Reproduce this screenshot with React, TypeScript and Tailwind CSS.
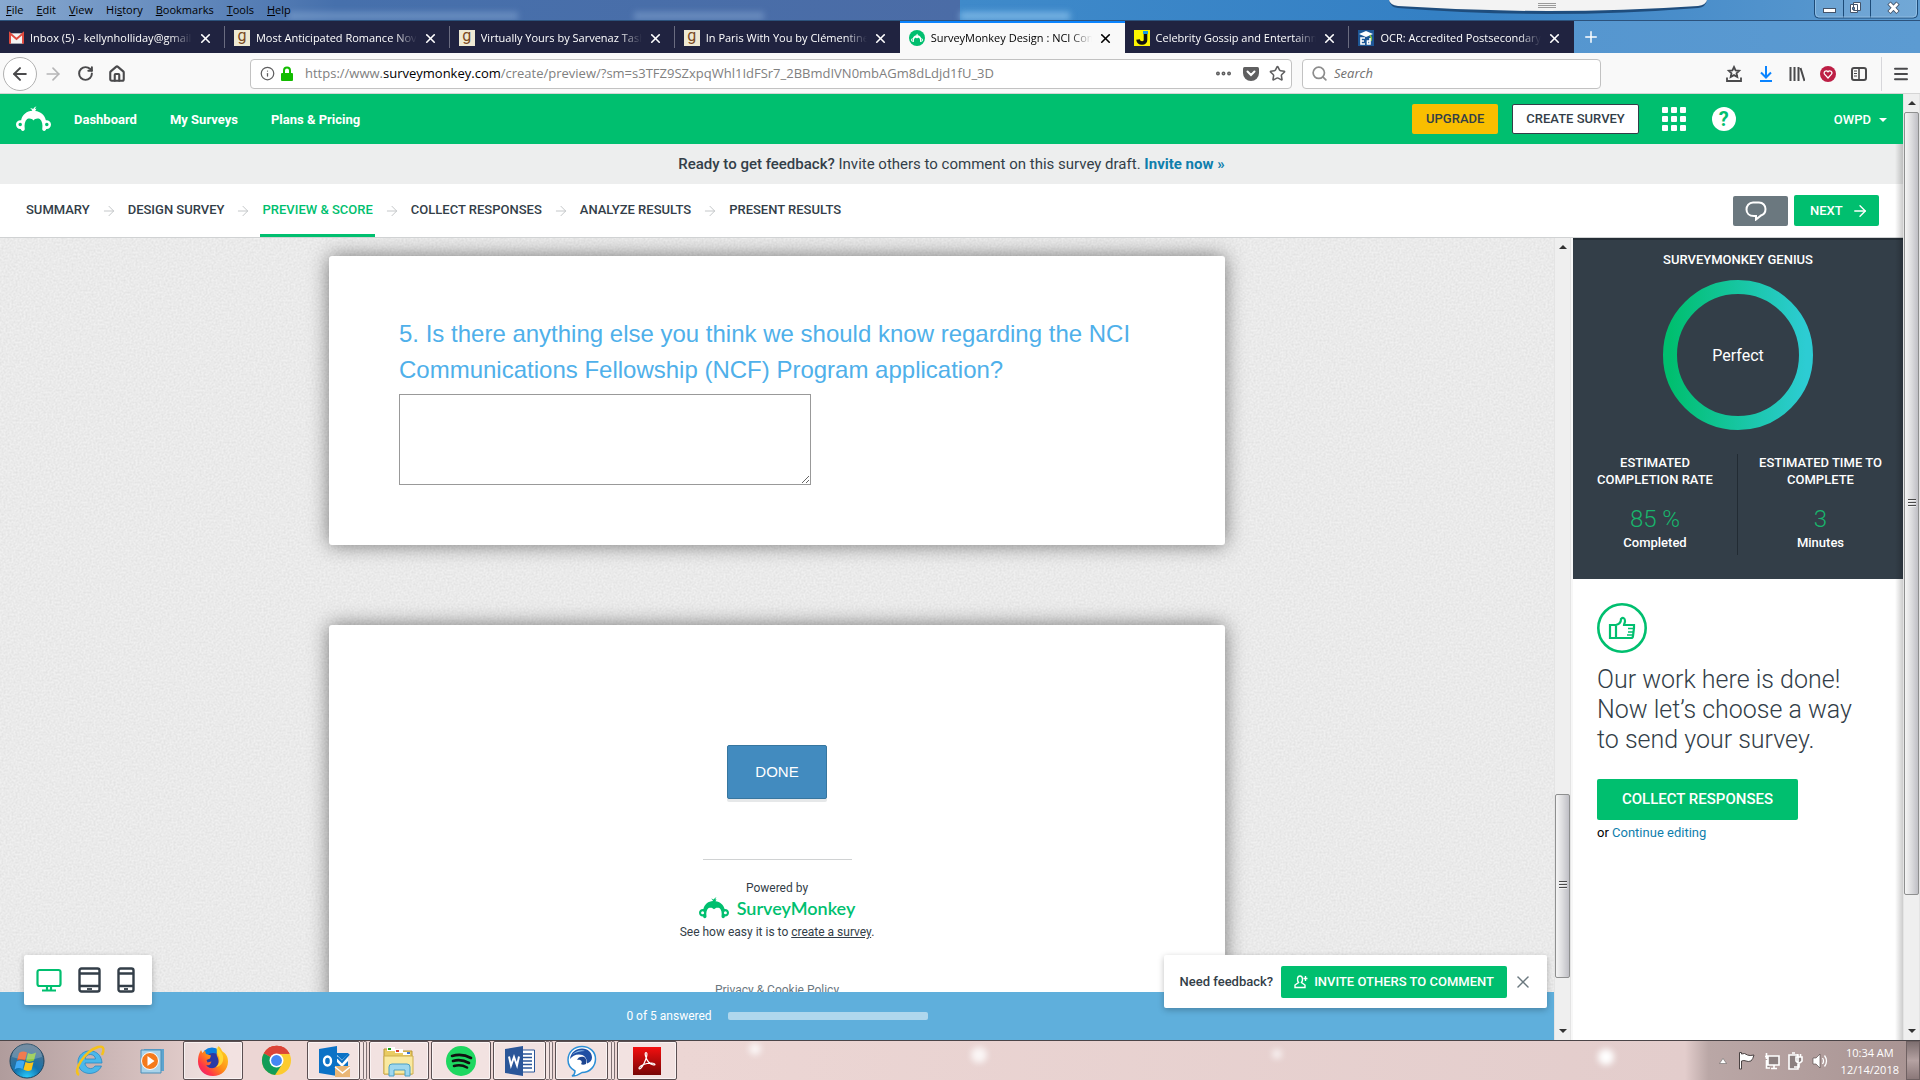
import type { ReactNode } from "react";
import {
  ArrowLeft,
  ArrowRight,
  RotateCw,
  House,
  Info,
  Search,
  Star,
  X,
  Plus,
  Menu,
  Ellipsis,
} from "lucide-react";

const tabs = [
  { title: "Inbox (5) - kellynholliday@gmail.com", icon: <GmailIcon /> },
  { title: "Most Anticipated Romance Novels", icon: <GoodreadsIcon /> },
  { title: "Virtually Yours by Sarvenaz Tash", icon: <GoodreadsIcon /> },
  { title: "In Paris With You by Clémentine Be", icon: <GoodreadsIcon /> },
  { title: "SurveyMonkey Design : NCI Comm", icon: <MonkeyFavicon />, active: true },
  { title: "Celebrity Gossip and Entertainment", icon: <JustJaredIcon /> },
  { title: "OCR: Accredited Postsecondary Ins", icon: <EdIcon /> },
];

const menus = ["File", "Edit", "View", "History", "Bookmarks", "Tools", "Help"];

const steps = [
  "SUMMARY",
  "DESIGN SURVEY",
  "PREVIEW & SCORE",
  "COLLECT RESPONSES",
  "ANALYZE RESULTS",
  "PRESENT RESULTS",
];

export default function App() {
  return (
    <div className="flex h-screen flex-col overflow-hidden bg-white font-['Roboto','Liberation_Sans',sans-serif] text-[#333e48]">
      <TitleBar />
      <TabStrip />
      <Toolbar />

      <div className="flex min-h-0 flex-1">
        <div className="relative flex min-w-0 flex-1 flex-col">
          <SiteHeader />
          <div className="flex h-10 shrink-0 items-center justify-center bg-[#edeeee] text-[15px]">
            <p>
              <b className="font-medium">Ready to get feedback?</b> Invite others to comment on this survey draft.{" "}
              <a href="#invite" className="font-bold text-[#0f7eac]">
                Invite now »
              </a>
            </p>
          </div>
          <StepNav />
          <div className="flex min-h-0 flex-1">
            <SurveyPreview />
            <InnerScrollbar />
            <GeniusPanel />
          </div>
          <div className="pointer-events-none absolute inset-y-0 top-[50px] right-0 w-2 bg-linear-to-r from-transparent to-black/20" />
        </div>
        <PageScrollbar />
      </div>

      <Taskbar />
    </div>
  );
}

/* Browser ------------------------------------------------------------ */

function TitleBar() {
  return (
    <div className="relative flex h-[21px] shrink-0 items-start overflow-hidden border-b border-[#2c527c] bg-[#3f86c6] font-['Open_Sans','Noto_Sans',sans-serif]">
      <div className="absolute inset-y-0 left-0 w-1/2 bg-linear-to-r from-[#88a9d0] via-[#4670ac] via-35% to-[#4b6ca6]" />
      <div className="absolute inset-y-0 right-0 left-1/2 bg-linear-to-r from-[#3f8aca] via-[#3480c4] to-[#5d9bd0]" />
      {/* windows behind the glass */}
      <div className="absolute top-3 left-[15%] h-2 w-[230px] bg-[#9dbbe2]/40 blur-[3px]" />
      <div className="absolute top-3 left-[33%] h-2 w-[130px] bg-[#9dbbe2]/40 blur-[3px]" />
      <div className="absolute top-3 left-1/2 h-2 w-[110px] bg-[#9fd0f5]/60 blur-[3px]" />
      <nav className="relative flex gap-[13px] pl-1.5 text-[11px] leading-5 text-black [text-shadow:0_0_5px_#fff,0_0_7px_#fff]">
        {menus.map((name) => {
          const at = name === "History" ? 2 : 0;
          return (
            <button key={name} type="button" className="block">
              {name.slice(0, at)}
              <u>{name[at]}</u>
              {name.slice(at + 1)}
            </button>
          );
        })}
      </nav>
      <svg className="absolute top-0 left-[72.3%] h-4 w-[320px]" viewBox="0 0 320 16">
        <path d="M1 0 Q2 7 10 8 Q160 20 310 8 Q318 7 319 0 Z" fill="#1f4d7d" />
        <path d="M1 0 Q2 5 10 6 Q160 16 310 6 Q318 5 319 0 Z" fill="#f3f3f3" />
        <path d="M150 3.5h18M150 5.5h18M150 7.5h18" stroke="#9a9a9a" />
      </svg>
      <svg className="absolute top-0 right-[2px] h-[19px] w-[104px]" viewBox="0 0 104 19">
        <path d="M.5 0v14q0 4 4 4h95q4 0 4-4V0M29.5 0v18M56.5 0v18" fill="#ffffff22" stroke="#1d4b78" />
        <path d="M1.5 0v13q0 4 4 4h93q4 0 4-4V0" fill="none" stroke="#9cc6e8" opacity=".7" />
        <rect x="9.5" y="8.5" width="12" height="4" fill="#fff" stroke="#44546a" />
        <path d="M39.5 2.5h7v8h-7zM36.500 4.500h7v8h-7z" fill="#fff" stroke="#44546a" />
        <path d="M38.5 7.5h2v2h-2z" fill="#5890c4" stroke="#44546a" />
        <path d="M75 3l9 9.500M84 3l-9 9.500" stroke="#44546a" strokeWidth="4.6" />
        <path d="M75.5 3.500l8 8.500M83.500 3.500l-8 8.500" stroke="#fff" strokeWidth="2.8" />
      </svg>
    </div>
  );
}

function TabStrip() {
  return (
    <div className="flex h-8 shrink-0 items-stretch bg-linear-to-r from-[#3480c4] to-[#5c9bd2] font-['Open_Sans','Noto_Sans',sans-serif] text-[11px]">
      <div className="flex w-[82%] bg-[#202340]">
        {tabs.map((tab, i) => (
          <div
            key={tab.title}
            className={`flex min-w-0 flex-1 items-center pl-[9px] pr-3 ${
              tab.active ? "border-t-2 border-[#0a84ff] bg-[#f9f9f9] text-black" : "pt-0.5 text-white"
            } ${i < 3 || i === 5 ? "bg-[linear-gradient(#6a6c80,#6a6c80)] bg-[length:1px_22px] bg-[position:right_center] bg-no-repeat" : ""}`}
          >
            <span className="shrink-0">{tab.icon}</span>
            <span className="ml-1.5 min-w-0 flex-1 overflow-hidden whitespace-nowrap [mask-image:linear-gradient(to_right,#000_86%,transparent)]">
              {tab.title}
            </span>
            <button type="button" aria-label="Close tab" className="ml-1.5">
              <X size={15} strokeWidth={2.6} />
            </button>
          </div>
        ))}
      </div>
      <button type="button" aria-label="New tab" className="ml-2 text-white">
        <Plus size={18} />
      </button>
    </div>
  );
}

function Toolbar() {
  return (
    <div className="flex h-[41px] shrink-0 items-center border-b border-[#d5d5d5] bg-[#f9f9f9] pt-px font-['Open_Sans','Noto_Sans',sans-serif] text-[#4a4a4c]">
      <button
        type="button"
        aria-label="Back"
        className="ml-[3px] flex size-[34px] items-center justify-center rounded-full border border-[#b1b1b1] bg-white"
      >
        <ArrowLeft size={20} strokeWidth={2.4} />
      </button>
      <button type="button" aria-label="Forward" className="ml-1.5 text-[#b5b5b6]">
        <ArrowRight size={20} />
      </button>
      <button type="button" aria-label="Reload" className="ml-3.5">
        <RotateCw size={17} strokeWidth={2.8} />
      </button>
      <button type="button" aria-label="Home" className="ml-3.5">
        <House size={18} strokeWidth={2.8} />
      </button>
      <div className="ml-[124px] flex h-[30px] flex-1 items-center rounded-sm border border-[#c2c2c2] bg-white px-[9px] text-[#5f5f60]">
        <Info size={15} />
        <svg className="ml-1.5 h-4 w-3" viewBox="0 0 12 16">
          <path d="M3 8V4.5a3 3 0 0 1 6 0V8" fill="none" stroke="#12bc00" strokeWidth="2" />
          <rect y="7" width="12" height="8" rx="1" fill="#12bc00" />
        </svg>
        <p className="ml-3 flex-1 truncate text-[13px] text-[#808080]">
          https://www.<span className="text-black">surveymonkey.com</span>
          /create/preview/?sm=s3TFZ9SZxpqWhl1IdFSr7_2BBmdIVN0mbAGm8dLdjd1fU_3D
        </p>
        <Ellipsis size={19} strokeWidth={3} />
        <svg className="ml-2.5 h-4 w-4" viewBox="0 0 16 16">
          <path d="M1.5 1h13q1.500 0 1.500 1.500V7a8 8 0 0 1-16 0V2.500Q0 1 1.500 1z" fill="#5f5f60" />
          <path d="M4.5 5.500 8 9l3.500-3.500" fill="none" stroke="#fff" strokeWidth="2" strokeLinecap="round" />
        </svg>
        <Star size={17} strokeWidth={2.2} className="ml-2.5 -mr-1" />
      </div>
      <label className="ml-2.5 flex h-[30px] w-[299px] items-center gap-1.5 rounded-sm border border-[#c2c2c2] bg-white px-2">
        <Search size={17} strokeWidth={2.4} className="shrink-0 text-[#8c8c8c]" />
        <input
          type="search"
          aria-label="Search"
          placeholder="Search"
          className="w-full text-[13px] italic outline-none placeholder:text-[#707070]"
        />
      </label>
      <div className="ml-[124px] flex items-center gap-[15px]">
        <svg className="size-[18px]" viewBox="0 0 18 18" fill="none" stroke="#4a4a4c" strokeWidth="1.8">
          <path d="M9 2l1.600 3.400 3.600.4-2.700 2.500.8 3.600L9 10.100l-3.300 1.800.8-3.600-2.700-2.500 3.600-.4z" />
          <path d="M2 12.5v3.500h14v-3.500" />
        </svg>
        <svg className="size-4" viewBox="0 0 16 16" fill="none" stroke="#0a84ff" strokeWidth="2">
          <path d="M8 0v11M3 6.500l5 5 5-5M2 15h12" />
        </svg>
        <svg className="size-4" viewBox="0 0 16 16" stroke="#4a4a4c" strokeWidth="2">
          <path d="M1.5 1v14M5.500 1v14M9.500 1v14M11.500 2l4 13" />
        </svg>
        <svg className="size-4" viewBox="0 0 16 16">
          <circle cx="8" cy="8" r="8" fill="#bd1f45" />
          <path d="M8 12 4.500 8.200a2 2 0 0 1 3.500-2.400 2 2 0 0 1 3.500 2.400z" fill="none" stroke="#fff" strokeWidth="1.2" />
        </svg>
        <svg className="size-4" viewBox="0 0 16 16" fill="none" stroke="#4a4a4c">
          <rect x="1" y="2" width="14" height="12" rx="2" strokeWidth="2" />
          <path d="M8 2v12" strokeWidth="1.6" />
          <path d="M3 5h3M3 7.500h3M3 10h3" />
        </svg>
      </div>
      <div className="ml-3.5 h-[34px] w-px bg-[#d7d7db]" />
      <button type="button" aria-label="Open menu" className="mr-2.5 ml-2.5">
        <Menu size={18} strokeWidth={2.6} />
      </button>
    </div>
  );
}

/* SurveyMonkey page -------------------------------------------------- */

function SiteHeader() {
  return (
    <header className="flex h-[50px] shrink-0 items-center bg-[#00bf6f] text-[13px] text-white">
      <a href="#home" aria-label="Home" className="ml-4">
        <MonkeyLogo className="h-[26px] w-[35px]" />
      </a>
      <nav className="ml-[23px] flex gap-[33px] pt-0.5 font-bold">
        <a href="#dashboard">Dashboard</a>
        <a href="#surveys">My Surveys</a>
        <a href="#pricing">Plans &amp; Pricing</a>
      </nav>
      <button type="button" className="ml-auto h-[30px] rounded-xs bg-[#f9be00] px-[14px] font-medium text-[#333e48]">
        UPGRADE
      </button>
      <button
        type="button"
        className="ml-3.5 h-[30px] rounded-xs border border-[#333e48] bg-white px-[13px] font-medium text-[#333e48]"
      >
        CREATE SURVEY
      </button>
      <button type="button" aria-label="Apps" className="ml-[23px] grid grid-cols-3 gap-[3px]">
        {Array.from({ length: 9 }, (_, i) => (
          <span key={i} className="size-1.5 rounded-[1px] bg-white" />
        ))}
      </button>
      <button
        type="button"
        aria-label="Help"
        className="ml-[26px] flex size-6 items-center justify-center rounded-full bg-white text-[20px] leading-6 font-bold text-[#00bf6f]"
      >
        ?
      </button>
      <button type="button" className="mr-4 ml-[98px] flex items-center gap-2 pt-0.5 font-medium">
        OWPD
        <span className="border-x-4 border-t-4 border-x-transparent border-t-white" />
      </button>
    </header>
  );
}

function StepNav() {
  return (
    <div className="flex h-[54px] shrink-0 items-stretch border-b border-[#d0d2d3] bg-white text-[13px] font-medium">
      <nav className="flex items-stretch pl-6">
        {steps.map((step, i) => (
          <div key={step} className="flex items-stretch">
            {i > 0 && (
              <ArrowRight size={16} strokeWidth={1.5} className="mx-[9px] mt-[19px] text-[#c4c7c9]" />
            )}
            <a
              href={`#step-${i}`}
              className={`border-b-[3px] px-0.5 pt-4 leading-5 ${
                i === 2 ? "border-[#00bf6f] text-[#00bf6f]" : "border-transparent"
              }`}
            >
              {step}
            </a>
          </div>
        ))}
      </nav>
      <button
        type="button"
        aria-label="Comments"
        className="mt-3 ml-auto flex h-[30px] w-[55px] items-center rounded-xs bg-[#6b787f] pl-[12px]"
      >
        <svg className="h-5 w-[22px]" viewBox="0 0 22 20" fill="none" stroke="#fff" strokeWidth="2">
          <path d="M9 15C4 15 1.500 12 1.500 8.500S4 1.500 8 1.500h6c4 0 6.500 3 6.500 6.500 0 3-1.500 5.500-4.500 6.500L11 18.500V15z" />
        </svg>
      </button>
      <button
        type="button"
        className="mt-[11px] mr-6 ml-1.5 flex h-[31px] w-[85px] items-center justify-between rounded-xs bg-[#00bf6f] pr-2.5 pl-4 text-white"
      >
        NEXT
        <ArrowRight size={18} strokeWidth={1.8} />
      </button>
    </div>
  );
}

function SurveyPreview() {
  return (
    <main className="relative flex min-w-0 flex-1 flex-col bg-[#f0f0f0]">
      {/* paper grain */}
      <svg className="absolute inset-0 h-full w-full opacity-[0.06]" aria-hidden="true">
        <filter id="grain" colorInterpolationFilters="sRGB">
          <feTurbulence type="fractalNoise" baseFrequency="0.5" numOctaves="2" />
          <feColorMatrix values="1.6 0 0 0 -0.2  1.6 0 0 0 -0.2  1.6 0 0 0 -0.2  0 0 0 0 1" />
        </filter>
        <rect width="100%" height="100%" filter="url(#grain)" />
      </svg>

      <div className="relative min-h-0 flex-1 overflow-hidden pt-[18px] font-['Liberation_Sans',Arial,sans-serif]">
        <section className="mx-auto max-w-[896px] rounded-[3px] bg-white px-[70px] pt-[60px] pb-[60px] shadow-[0_0_20px_rgba(0,0,0,0.5)]">
          <label htmlFor="q5" className="block text-[24px] leading-9 text-[#4fb0ea]">
            5. Is there anything else you think we should know regarding the NCI Communications Fellowship (NCF) Program
            application?
          </label>
          <textarea id="q5" className="mt-1.5 block h-[91px] w-[412px] border border-[#999] bg-white" />
        </section>

        <section className="mx-auto mt-20 flex h-[420px] max-w-[896px] flex-col items-center rounded-[3px] bg-white pt-[120px] shadow-[0_0_20px_rgba(0,0,0,0.5)]">
          <button
            type="button"
            className="h-[54px] w-[100px] rounded-xs border border-[#37769f] bg-[#428bbf] text-[15px] text-white shadow-[0_3px_0_#e6e8e9]"
          >
            DONE
          </button>
          <div className="mt-[60px] w-[149px] border-t border-[#d0d2d3]" />
          <footer className="mt-5 flex flex-col items-center font-['Roboto',sans-serif] text-[12px] leading-4">
            <p>Powered by</p>
            <a href="#surveymonkey" className="flex items-center gap-2 text-[#00bf6f]">
              <MonkeyLogo className="h-[22px] w-[30px]" />
              <span className="font-['Lato',sans-serif] text-[18px] leading-6 font-semibold">SurveyMonkey</span>
            </a>
            <p className="mt-1">
              See how easy it is to{" "}
              <a href="#create" className="underline">
                create a survey
              </a>
              .
            </p>
            <a href="#privacy" className="mt-[42px] text-[#6b787f]">
              Privacy &amp; Cookie Policy
            </a>
          </footer>
        </section>
      </div>

      <div className="relative flex h-12 shrink-0 items-center justify-center gap-4 bg-[#5fafdc] text-[12px] text-white">
        <span>0 of 5 answered</span>
        <div className="h-2 w-[200px] rounded-xs bg-[#afd7ed]" />
      </div>

      <div className="absolute bottom-[35px] left-6 flex h-[50px] w-32 items-center gap-4 rounded-xs bg-white pl-3 shadow-[0_2px_6px_rgba(0,0,0,0.25)]">
        <button type="button" aria-label="Desktop">
          <svg className="h-6 w-[26px]" viewBox="0 0 26 24" fill="none" stroke="#00bf6f" strokeWidth="2.2">
            <rect x="1.5" y="2" width="23" height="16" rx="2" />
            <path d="M11 18v4M15 18v4M6 22.500h14" />
          </svg>
        </button>
        <button type="button" aria-label="Tablet">
          <svg className="h-[26px] w-[23px]" viewBox="0 0 23 26" fill="none" stroke="#333e48" strokeWidth="2.4">
            <rect x="1.5" y="1.5" width="20" height="23" rx="2" />
            <path d="M1 6.500h21M1 19h21" />
            <path d="M9 22h5" strokeWidth="1.8" />
          </svg>
        </button>
        <button type="button" aria-label="Phone">
          <svg className="h-[26px] w-[18px]" viewBox="0 0 18 26" fill="none" stroke="#333e48" strokeWidth="2.4">
            <rect x="1.5" y="1.5" width="15" height="23" rx="2" />
            <path d="M1 6.500h16M1 19h16" />
            <path d="M7 22h4" strokeWidth="1.8" />
          </svg>
        </button>
      </div>

      <div className="absolute right-[7px] bottom-8 flex h-[53px] items-center rounded-xs bg-white pr-[14px] pl-4 text-[13px] font-medium shadow-[0_2px_6px_rgba(0,0,0,0.25)]">
        <span>Need feedback?</span>
        <button type="button" className="ml-2 flex h-8 items-center gap-1.5 rounded-xs bg-[#00bf6f] px-[13px] text-white">
          <svg className="h-[14px] w-[14px]" viewBox="0 0 14 14" fill="none" stroke="#fff" strokeWidth="1.4">
            <path d="M4.5 7.500C3 5.500 3 1 6 1s3 4.500 1.500 6.500L11 10v2.500H1V10zM11.500 1v5M9.500 3.500h4" />
          </svg>
          INVITE OTHERS TO COMMENT
        </button>
        <button type="button" aria-label="Dismiss" className="ml-1.5 text-[#6b787f]">
          <X size={20} strokeWidth={1.8} />
        </button>
      </div>
    </main>
  );
}

function GeniusPanel() {
  return (
    <aside className="flex w-[330px] shrink-0 flex-col">
      <section className="border-t-2 border-[#252e36] bg-[#333e48] pt-[11px] pb-6 text-center text-[13px] leading-[17px] font-medium text-white">
        <h2>SURVEYMONKEY GENIUS</h2>
        <div className="relative mx-auto mt-[12px] size-[150px]">
          <svg className="size-full" viewBox="0 0 150 150">
            <linearGradient id="ring">
              <stop offset="0" stopColor="#00bf6f" />
              <stop offset="1" stopColor="#2dccd3" />
            </linearGradient>
            <circle cx="75" cy="75" r="68" fill="none" stroke="url(#ring)" strokeWidth="14" />
          </svg>
          <span className="absolute inset-0 flex items-center justify-center text-[16px] font-normal">Perfect</span>
        </div>
        <div className="mt-6 grid grid-cols-2">
          <div className="border-r border-[#222b33]">
            <h3 className="mx-auto w-32">ESTIMATED COMPLETION RATE</h3>
            <p className="mt-4 text-[24px] leading-[30px] font-light text-[#18b56c]">85 %</p>
            <p className="mb-1">Completed</p>
          </div>
          <div>
            <h3 className="mx-auto w-32">ESTIMATED TIME TO COMPLETE</h3>
            <p className="mt-4 text-[24px] leading-[30px] font-light text-[#18b56c]">3</p>
            <p className="mb-1">Minutes</p>
          </div>
        </div>
      </section>
      <section className="px-6 pt-6">
        <svg className="size-[50px]" viewBox="0 0 50 50" fill="none" stroke="#00bf6f">
          <circle cx="25" cy="25" r="23.7" strokeWidth="2.6" />
          <path
            d="M13 22h6v13h-6zM19 22c4-1 5-3 5-6 2-2 4-1 4 2 0 2-1 3-1 4h10v3l-1 8c0 1-1 2-2 2H19"
            strokeWidth="2.2"
          />
          <path d="M31 25.500h6M31 29h5.500M30 32h6" strokeWidth="1.6" />
        </svg>
        <p className="mt-3 text-[25px] leading-[30px] font-light">
          Our work here is done! Now let’s choose a way to send your survey.
        </p>
        <button type="button" className="mt-6 h-[41px] w-[201px] rounded-xs bg-[#00bf6f] text-[15px] font-medium text-white">
          COLLECT RESPONSES
        </button>
        <p className="mt-1 text-[13px] leading-[18px] text-black">
          or{" "}
          <a href="#edit" className="text-[#0f7eac]">
            Continue editing
          </a>
        </p>
      </section>
    </aside>
  );
}

/* Scrollbars --------------------------------------------------------- */

function Grip() {
  return (
    <svg className="h-[9px] w-2" viewBox="0 0 8 9" stroke="#4a4a4a">
      <path d="M0 .5h8M0 3.500h8M0 6.500h8" />
      <path d="M0 1.5h8M0 4.500h8M0 7.500h8" stroke="#fff" opacity=".6" />
    </svg>
  );
}

function Scrollbar({ children }: { children: ReactNode }) {
  return (
    <div className="flex w-[17px] shrink-0 flex-col items-center border-x border-[#e4e4e4] bg-[#efefef]">
      <span className="my-[7px] border-x-4 border-b-4 border-x-transparent border-b-[#333]" />
      <div className="flex w-full flex-1 flex-col">{children}</div>
      <span className="my-[7px] border-x-4 border-t-4 border-x-transparent border-t-[#333]" />
    </div>
  );
}

const thumb =
  "flex w-full basis-0 items-center justify-center rounded-xs border border-[#8e8f8f] bg-linear-to-r from-[#f5f5f5] via-[#dcdcde] to-[#bfbfc5]";

function InnerScrollbar() {
  return (
    <div className="flex w-[19px] shrink-0 bg-[#f7f7f7]">
      <Scrollbar>
        <div className="grow-[539]" />
        <div className={`grow-[183] ${thumb}`}>
          <Grip />
        </div>
        <div className="grow-[44]" />
      </Scrollbar>
    </div>
  );
}

function PageScrollbar() {
  return (
    <Scrollbar>
      <div className={`grow-[781] ${thumb}`}>
        <Grip />
      </div>
      <div className="grow-[127]" />
    </Scrollbar>
  );
}

/* Windows taskbar ---------------------------------------------------- */

function TaskButton({ label, stacked, open = true, children }: { label: string; stacked?: boolean; open?: boolean; children: ReactNode }) {
  if (!open) {
    return (
      <button type="button" aria-label={label} className="flex w-[62px] items-center justify-center">
        {children}
      </button>
    );
  }
  return (
    <div className="flex w-[62px] items-stretch">
      <button
        type="button"
        aria-label={label}
        className="flex flex-1 items-center justify-center rounded-xs border border-[#5b4f52] bg-white/30 shadow-[inset_0_0_0_1px_rgba(255,255,255,0.6)]"
      >
        {children}
      </button>
      {stacked ? (
        <div className="mr-0.5 flex w-[7px]">
          <span className="flex-1 rounded-r-xs border-y border-r border-[#7d7073] bg-white/30" />
          <span className="flex-1 rounded-r-xs border-y border-r border-[#7d7073] bg-white/30" />
        </div>
      ) : (
        <div className="w-0.5" />
      )}
    </div>
  );
}

function Taskbar() {
  return (
    <footer className="flex h-10 shrink-0 items-stretch border-t border-[#4b4548] bg-linear-to-r from-[#b09c9c] via-[#ecd6d4] via-12% to-[#ecd6d4] font-['Open_Sans','Noto_Sans',sans-serif]">
      <button type="button" aria-label="Start" className="flex w-[59px] items-center pl-[9px]">
        <svg className="size-9" viewBox="0 0 36 36">
          <defs>
            <radialGradient id="orb" cx=".5" cy="1" r=".9">
              <stop offset="0" stopColor="#2ad0ff" />
              <stop offset=".45" stopColor="#1273ae" />
              <stop offset="1" stopColor="#51718c" />
            </radialGradient>
          </defs>
          <circle cx="18" cy="18" r="17" fill="url(#orb)" stroke="#1c4560" />
          <path d="M10 10q4-2.500 8-.5l-2 8q-4-2-8 0z" fill="#ee5a24" />
          <path d="M19 10q4 2 8-.5l-2 8q-4 2-8 .5z" fill="#8cc63f" />
          <path d="M7.5 18.500q4-2 8 0l-2 7.500q-4-2-8 .5z" fill="#3fa9f5" />
          <path d="M16.5 19q4 2 8 0l-2 8q-4 2-8-.5z" fill="#fcc419" />
          <path d="M3 14a15 13 0 0 1 30 0q-15 5-30 0z" fill="#fff" opacity=".2" />
        </svg>
      </button>
      <TaskButton label="Internet Explorer" open={false}>
        <svg className="size-8" viewBox="0 0 32 32">
          <path
            fillRule="evenodd"
            d="M28 18H11c0 5 7 8 10 3h6.500C23 32 4 31 4 17S27 1 28 18zM11 14h10.500c-.5-6-10-6-10.500 0z"
            fill="#4bb8ea"
            stroke="#2489c5"
            strokeWidth=".8"
          />
          <path d="M5 30C-2 26 11 6 24 2c7-2 6 4 4 8" fill="none" stroke="#f5c21b" strokeWidth="2.4" />
        </svg>
      </TaskButton>
      <TaskButton label="Media Player" open={false}>
        <svg className="size-7" viewBox="0 0 28 28">
          <path d="M6 2h20v22H6z" fill="#5da4cf" />
          <path d="M3 3h20v23H3z" fill="#a9d3ea" stroke="#4b8db6" />
          <circle cx="12" cy="14" r="8.5" fill="#f47a1c" stroke="#fff" />
          <path d="M9.5 9v10l7-5z" fill="#fff" />
        </svg>
      </TaskButton>
      <TaskButton label="Firefox">
        <svg className="size-8" viewBox="0 0 32 32">
          <defs>
            <linearGradient id="fox" x1="1" y1="0" x2="0" y2="1">
              <stop offset="0" stopColor="#ffe226" />
              <stop offset=".5" stopColor="#ff8a16" />
              <stop offset=".75" stopColor="#ff3647" />
              <stop offset="1" stopColor="#e31587" />
            </linearGradient>
          </defs>
          <circle cx="15" cy="13" r="10.5" fill="#0b7fe0" />
          <circle cx="16" cy="16" r="8" fill="#2b3aa5" />
          <path
            d="M2.500 8 4 5l1.500 3L8 5.500 9 9l5 1.500-1 3-3.500 1.500 1 2.500 4-1-1.500 3c-1.500 1-3 1-4 .5 2 4 9 4.500 11.500 0 2-3.500.5-7-.5-9-1-3.500 1-8 1.500-10 2 2 3 3 3.500 5C29.500 9 31 12 31 16.500 31 25 24.500 31 16 31S1 25 1 16.500C1 13 1.500 10 2.500 8z"
            fill="url(#fox)"
          />
          <path d="M20 1.500C19 5 20 9 22 12c1 3 0 8-3 10 6-1 8-6 7-11-1-4-4-6-6-9.500z" fill="#ffe13a" opacity=".85" />
        </svg>
      </TaskButton>
      <TaskButton label="Chrome" open={false}>
        <svg className="size-[31px]" viewBox="0 0 32 32">
          <circle cx="16" cy="16" r="15" fill="#fccb2f" />
          <path d="M16 16 3 8.500A15 15 0 0 1 29.500 9H16z" fill="#dc4437" />
          <path d="M16 16 3 8.500A15 15 0 0 0 14.500 31L22 19.500z" fill="#119d58" />
          <path d="M10 12 3 8.500A15 15 0 0 1 29.500 9H16z" fill="#dc4437" />
          <circle cx="16" cy="16" r="7.2" fill="#fff" />
          <circle cx="16" cy="16" r="5.6" fill="#4587f3" />
        </svg>
      </TaskButton>
      <TaskButton label="Outlook" stacked>
        <svg className="size-8" viewBox="0 0 32 32">
          <path d="M18 8h12v15H18z" fill="#0b72c6" />
          <path d="m19 10 5 5 6-6v7l-6 6-5-5z" fill="#fff" />
          <path d="m19 12 5 5 7-8" fill="none" stroke="#0b72c6" strokeWidth="2" />
          <path d="M1 4 19 1v30L1 28z" fill="#0b72c6" />
          <ellipse cx="9.5" cy="16" rx="3.5" ry="4.5" fill="none" stroke="#fff" strokeWidth="2.4" />
          <path d="M17 21h15v11H17z" fill="#eab676" />
          <path d="m17 22 7.500 6 7.500-6" fill="none" stroke="#fff" strokeWidth="1.4" />
        </svg>
      </TaskButton>
      <TaskButton label="Explorer">
        <svg className="size-8" viewBox="0 0 32 32">
          <path d="M1 4h9l2 2h17v23H1z" fill="#e9cb63" stroke="#b99735" />
          <path d="M4 2h8v4H4zM12 4h8v4h-8z" fill="#fff" />
          <path d="M5 3h3v2H5z" fill="#1aa11a" />
          <path d="M13 5h3v2h-3z" fill="#d83b2b" />
          <path d="M20 7h7v3h-7z" fill="#fff" />
          <path d="M24 7h3v2h-3z" fill="#3b78d8" />
          <path d="M1 11h29v18H1z" fill="#f9e9a0" stroke="#cfae4c" />
          <path d="M6 31V22q0-3 3-3h15q3 0 3 3v9h-5v-6H11v6z" fill="#9ed7ee" stroke="#4a9fc6" />
        </svg>
      </TaskButton>
      <TaskButton label="Spotify">
        <svg className="size-8" viewBox="0 0 32 32">
          <circle cx="16" cy="16" r="15" fill="#1ed760" />
          <path d="M7 11q10-3 19 2M8 16q8-2.500 16 2M9 21q7-2 13 1.500" fill="none" stroke="#111" strokeWidth="2.6" strokeLinecap="round" />
        </svg>
      </TaskButton>
      <TaskButton label="Word" stacked>
        <svg className="size-8" viewBox="0 0 32 32">
          <path d="M18 5h12.500v22H18z" fill="#fff" stroke="#2a5699" />
          <path d="M19 9h9M19 12.500h9M19 16h9M19 19.500h9M19 23h9" stroke="#2a5699" strokeWidth="1.3" />
          <path d="M1 4 19 1v30L1 28z" fill="#2a5699" />
          <path d="m5 11.500 2 9 3-8.500 3 8.500 2-9" fill="none" stroke="#fff" strokeWidth="2" />
        </svg>
      </TaskButton>
      <TaskButton label="Jabber" stacked>
        <svg className="size-8" viewBox="0 0 32 32">
          <path
            d="M16 1.500c8 0 13.500 5.500 13.500 12.500S24 27.500 16 27.500c-2 1.500-5 3.500-10 3.500 2-1 3-3 3-5C4.500 23.500 2 19.500 2 15 2 7 8 1.500 16 1.500z"
            fill="#fff"
            stroke="#2c8fd6"
            strokeWidth="1.5"
          />
          <path d="M4 14C5 7 10 3.500 16 3.500c6 0 10 4 10 9 0 3-2 5-5 6 0-6-3-9-8-9-4 0-7 2-9 4.500z" fill="#1f4fa3" />
          <path d="M11 15c1-3 4-4 7-3 2 1 3 4 2 7-2 1-4 1-5 0 2-2 0-5-4-4z" fill="#1d4590" />
          <path d="M6 10c3-4 9-6 13-4-5 0-9 1-13 4z" fill="#8fbdea" />
        </svg>
      </TaskButton>
      <TaskButton label="Acrobat Reader">
        <svg className="size-[30px]" viewBox="0 0 30 30">
          <defs>
            <linearGradient id="pdf" x2="0" y2="1">
              <stop offset="0" stopColor="#f40f0f" />
              <stop offset="1" stopColor="#780606" />
            </linearGradient>
          </defs>
          <path d="M1 1h28v28H1z" fill="url(#pdf)" />
          <path
            d="M14 6.500c2 0 .5 6-2 11s-4.500 6-5 5 2.500-4 8-5 8 0 8 1-4 .5-6.500-2.500-4.500-9.500-2.500-9.500z"
            fill="none"
            stroke="#fff"
            strokeWidth="1.2"
          />
        </svg>
      </TaskButton>

      <div className="relative flex-1 overflow-hidden bg-linear-to-r from-transparent to-[#e3cdcc]">
        <span className="absolute top-0.5 left-[7%] size-3 rounded-full bg-white/80 blur-[3px]" />
        <span className="absolute top-1.5 left-[29%] size-4 rounded-full bg-white/80 blur-[3px]" />
        <span className="absolute top-2 left-[59%] size-2.5 rounded-full bg-white/70 blur-[3px]" />
        <span className="absolute top-2 right-[7%] size-4 rounded-full bg-white blur-[3px]" />
      </div>

      <div className="flex items-center bg-linear-to-r from-[#e3cdcc] via-[#baa7a6] via-10% to-[#a89392] pl-[34px] text-white">
        <svg className="h-1.5 w-2" viewBox="0 0 8 6">
          <path d="M4 .5 7.500 5.500h-7z" fill="#fff" stroke="#555" strokeWidth=".5" />
        </svg>
        <svg className="ml-3 h-[18px] w-4" viewBox="0 0 16 18" fill="#fff" stroke="#4a4242">
          <path d="M.5.5h2V2q3-1.500 6 1 2 1 6.500 0-1 4-3 6-3 1-5 0t-4.500 0v8h-2z" />
        </svg>
        <svg className="ml-[9px] h-[18px] w-4" viewBox="0 0 16 18" fill="#8c8080" stroke="#fff" strokeWidth="1.6">
          <path d="M4 4h11v9H4zM7 16.500h6M10 13v3M2.500 1v6M1 4.500h3M2.500 8v8H6" />
        </svg>
        <svg className="ml-2 h-[18px] w-4" viewBox="0 0 16 18" fill="#8c8080" stroke="#fff" strokeWidth="1.6">
          <path d="M1 3h9v14H1zM4 1h3M8 5h6v4q-3 4-6 0zM9.500 2v3M12.500 2v3M11 11v4H6" />
        </svg>
        <svg className="ml-2 h-[18px] w-4" viewBox="0 0 16 18" fill="#fff" stroke="#4a4242" strokeWidth=".6">
          <path d="M1 6h3l4-4v14l-4-4H1z" />
          <path d="M10.500 6q2 3 0 6M12.500 3.500q4 5.500 0 11" fill="none" stroke="#fff" strokeWidth="1.3" />
        </svg>
        <div className="mr-[7px] ml-[13px] text-center text-[11px] leading-[17px] whitespace-nowrap">
          <p>10:34 AM</p>
          <p>12/14/2018</p>
        </div>
        <button
          type="button"
          aria-label="Show desktop"
          className="h-full w-[14px] border border-[#6f6162] bg-linear-to-b from-[#7e6f70] via-[#b5a2a2] to-[#8b7879]"
        />
      </div>
    </footer>
  );
}

/* Logos -------------------------------------------------------------- */

function MonkeyLogo({ className }: { className?: string }) {
  return (
    <svg className={className} viewBox="0 0 30 22" fill="currentColor" aria-hidden="true">
      <path
        fillRule="evenodd"
        d="M14 4C13.500 2.500 12.500 2 12 1.800q1.600-.3 2.700.7Q15.300 1 17.500 0 16.300 1.600 16.300 2.500L17.500 2.300 16.500 4.200C21 4.700 24.500 7.500 25.600 12c2.500-.2 4.400 1.400 4.400 3.700 0 2.200-1.600 3.800-3.800 3.900l-.3 0c-.2 1-.9 1.700-1.800 1.600-1 0-1.700-.8-1.600-1.900.5-3.400 0-6.300-2.100-8.200-2.200-.9-4.100-.3-5.400 1.200-1.300-1.500-3.200-2.100-5.400-1.200-2.100 1.900-2.600 4.800-2.100 8.200.1 1.100-.6 1.900-1.600 1.900-.9.1-1.600-.6-1.800-1.600h-.3C1.600 19.500 0 17.900 0 15.700 0 13.400 1.900 11.800 4.400 12 5.500 7.200 9.300 4.200 14 4zM3.600 14.200a1.500 1.500 0 1 0 0 3 1.500 1.500 0 0 0 0-3zM26.400 14.200a1.500 1.500 0 1 0 0 3 1.500 1.500 0 0 0 0-3z"
      />
    </svg>
  );
}

function MonkeyFavicon() {
  return (
    <span className="flex size-4 items-center justify-center rounded-full bg-[#00bf6f] text-white">
      <MonkeyLogo className="h-2.5 w-3" />
    </span>
  );
}

function GmailIcon() {
  return (
    <svg className="h-4 w-[15px]" viewBox="0 0 16 16">
      <path d="M1 3h14v11H1z" fill="#f4f4f4" />
      <path d="M1 14V3l7 6 7-6v11" fill="none" stroke="#e04a3f" strokeWidth="2.2" />
    </svg>
  );
}

function GoodreadsIcon() {
  return (
    <span className="flex size-4 items-center justify-center bg-[#eee9d3] pb-1 font-['Roboto',sans-serif] text-[16px] leading-4 text-[#7a4a22]">
      g
    </span>
  );
}

function JustJaredIcon() {
  return (
    <svg className="size-4" viewBox="0 0 16 16">
      <path d="M0 0h16v16H0z" fill="#fdf500" />
      <path d="M11.500 4v6q0 3-3.500 3T4 9.500" fill="none" stroke="#111" strokeWidth="3.6" />
      <path d="M9 1h5v3H9z" fill="#1b9be0" />
    </svg>
  );
}

function EdIcon() {
  return (
    <svg className="size-4" viewBox="0 0 16 16">
      <path d="M0 0h16v16H0z" fill="#1d5796" />
      <path d="m1 4 7-3 7 3-7 3z" fill="#fff" />
      <path d="M12 5q2 3 1 6" fill="none" stroke="#84c441" strokeWidth="1.6" />
      <path d="M7 8H3v6h4M3 11h3M12 8v6H9.500v-3H12" fill="none" stroke="#fff" strokeWidth="1.6" />
    </svg>
  );
}
